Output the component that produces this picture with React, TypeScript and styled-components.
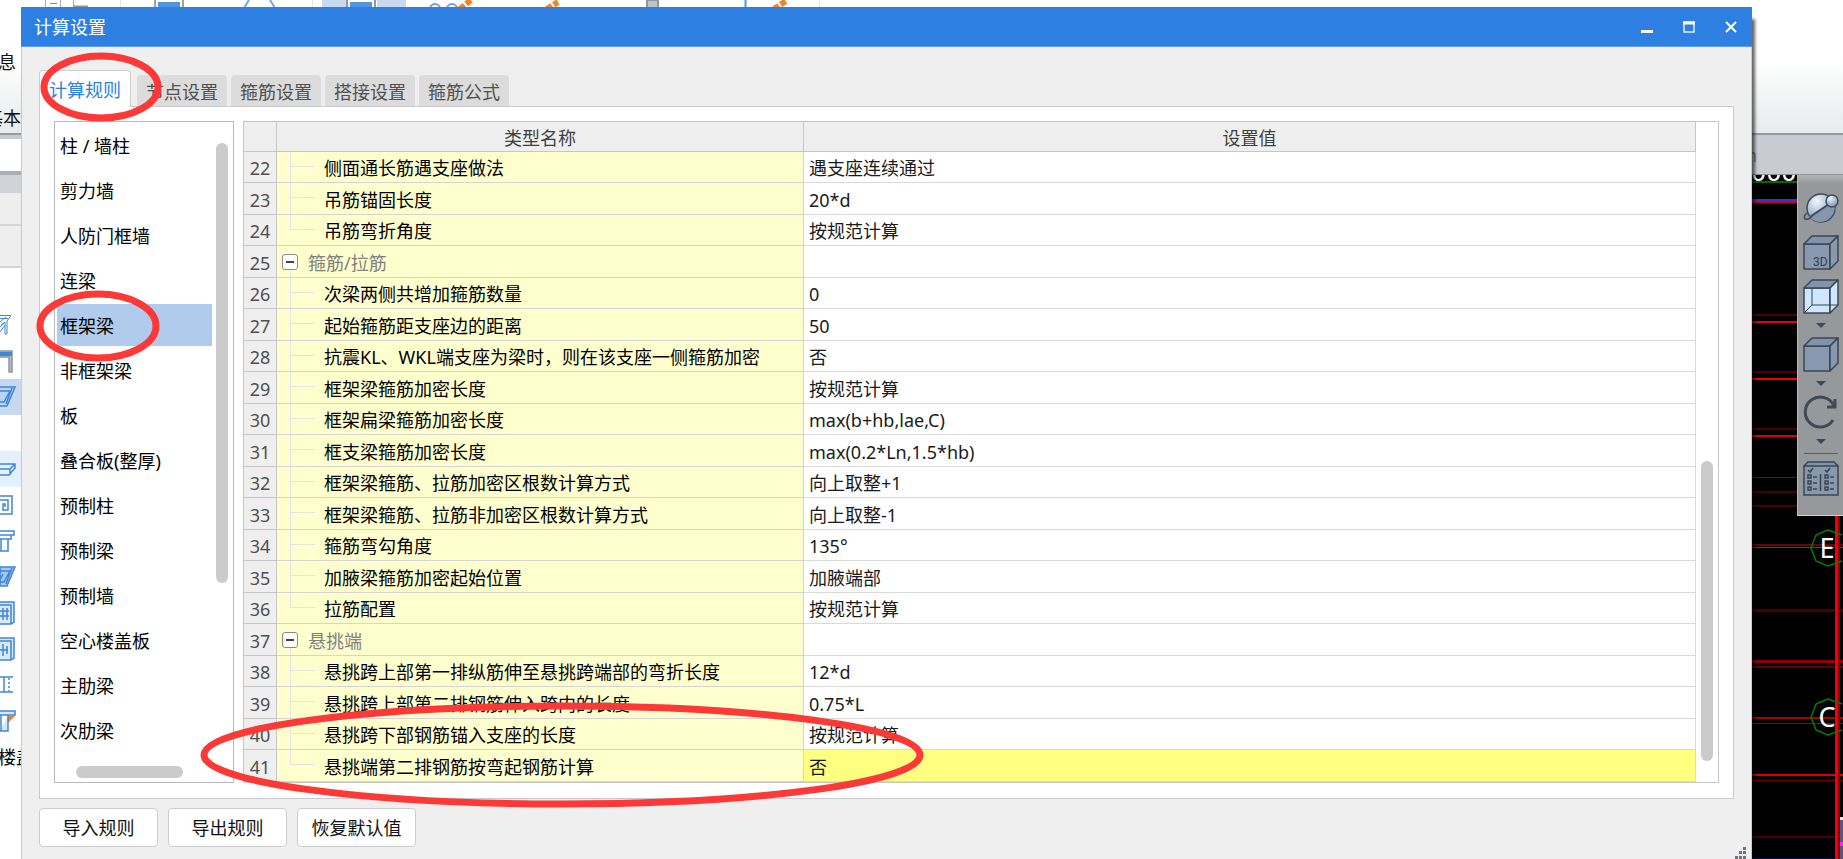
import React from "react";
import styled, { createGlobalStyle } from "styled-components";

const GlobalStyle = createGlobalStyle`
  * { box-sizing: border-box; }
  html, body { margin: 0; padding: 0; overflow: hidden; }
  body, button {
    font-family: "Noto Sans", "Noto Sans CJK SC", sans-serif;
    font-size: 18px;
    line-height: 24px;
  }
  button { margin: 0; padding: 0; border: 0; background: none; color: inherit; white-space: nowrap; }
  svg { display: block; flex: none; }
`;

const Page = styled.div`
  position: relative;
  display: flex;
  flex-direction: column;
  min-height: 100vh;
  overflow: hidden;
  background: #fff;
`;

/* ---------- host application behind the dialog ---------- */

const Ribbon = styled.header`
  display: flex;
  height: 135px;
  overflow: hidden;
  border-bottom: 2px solid #949a9d;
  background: linear-gradient(#fff 0, #fff 60px, #e6ebeb 133px);
`;

const RibbonLabels = styled.div`
  display: flex;
  flex-direction: column;
  align-items: flex-end;
  gap: 32px;
  width: 21px;
  padding-top: 50px;
  white-space: nowrap;
  color: #111;
`;

const RibbonLabel = styled.span<{ $inset?: boolean }>`
  padding-right: ${(p) => (p.$inset ? 5 : 0)}px;
`;

const Workspace = styled.div`
  display: flex;
  flex: 1;
`;

const SideColumn = styled.aside`
  display: flex;
  flex-direction: column;
  width: 21px;
  overflow: hidden;
  background: #fff;
`;

const SideField = styled.div`
  height: 40px;
  border-top: 4px solid #c8cbd0;
  border-bottom: 4px solid #a9afb5;
  background: #fff;
`;

const SideCaption = styled.div`
  height: 18px;
  background: #d0d3d8;
`;

const SideBar = styled.div<{ $height: number }>`
  height: ${(p) => p.$height}px;
  border-bottom: 2px solid #d3d5d8;
  background: #eee;
`;

const ToolList = styled.ul`
  display: flex;
  flex-direction: column;
  margin: 0;
  padding: 39px 0 0;
  list-style: none;
`;

const ToolItem = styled.li<{ $bg?: string }>`
  display: flex;
  align-items: center;
  justify-content: flex-start;
  height: 36px;
  white-space: nowrap;
  background: ${(p) => p.$bg ?? "transparent"};
`;

const ToolGroupLabel = styled.span`
  margin-left: -2px;
`;

const Viewport = styled.main`
  position: relative;
  display: flex;
  flex: 1;
  flex-direction: column;
  background: #000;
`;

const ViewHeader = styled.div`
  display: flex;
  justify-content: flex-end;
  align-items: center;
  height: 40px;
  padding-right: 86px;
  border-bottom: 1px solid #8d9194;
  background: #c8cbd0;
  color: #85817c;
`;

const Drawing = styled.div`
  display: flex;
  flex: 1;
  justify-content: flex-end;
  overflow: hidden;
`;

const ViewToolbar = styled.div`
  position: absolute;
  top: 40px;
  right: 0;
  display: flex;
  flex-direction: column;
  align-items: center;
  width: 46px;
  height: 341px;
  padding: 16px 4px 0 5px;
  border-left: 1px solid #b7b9bb;
  border-bottom: 1px solid #d0d2d4;
  background: linear-gradient(#b4b6b8 0, #96999c 8px);
`;

const ViewTool = styled.button`
  height: 36px;
  margin-bottom: 8px;
`;

const Caret = styled.span`
  width: 0;
  height: 0;
  margin-bottom: 9px;
  border: 5px solid transparent;
  border-top-color: #3c4956;
  border-bottom-width: 0;
`;

const ToolRule = styled.hr`
  width: 34px;
  height: 1px;
  margin: 0 0 7px;
  border: 0;
  background: #5a5e62;
`;

/* ---------- dialog ---------- */

const Dialog = styled.section`
  position: absolute;
  top: 7px;
  right: 91px;
  bottom: 0;
  left: 21px;
  display: flex;
  flex-direction: column;
  background: #efefef;
  border: solid #c3cbd9;
  border-width: 0 1px;
  box-shadow: 3px 12px 3px rgba(0, 0, 0, 0.6);
`;

const TitleBar = styled.header`
  display: flex;
  height: 40px;
  margin: 0 -1px;
  padding-left: 13px;
  background: #2d80e2;
  border-bottom: 1px solid #5d9ee9;
  color: #fff;
`;

const Title = styled.h1`
  flex: 1;
  margin: 0;
  font-size: 18px;
  font-weight: 400;
  line-height: 41px;
`;

const WindowButton = styled.button`
  display: flex;
  align-items: center;
  justify-content: center;
  width: 42px;
`;

const Tabs = styled.div`
  display: flex;
  align-items: flex-end;
  gap: 4px;
  height: 59px;
  padding: 0 17px;
`;

const Tab = styled.button<{ $active?: boolean }>`
  position: relative;
  width: ${(p) => (p.$active ? 92 : 90)}px;
  height: ${(p) => (p.$active ? 37 : 31)}px;
  margin: ${(p) => (p.$active ? "0 2px -1px 0" : "0")};
  padding-top: 2px;
  border: ${(p) => (p.$active ? "1px solid #cbcdd0" : "0")};
  border-bottom: 0;
  border-radius: 4px 4px 0 0;
  background: ${(p) => (p.$active ? "#fff" : "#dcdcdc")};
  color: ${(p) => (p.$active ? "#2d80e2" : "#505050")};
`;

const Panel = styled.div`
  display: flex;
  flex: 1;
  gap: 9px;
  margin: 0 17px;
  padding: 14px 14px 15px;
  border: 1px solid #c8cacd;
  background: #fff;
`;

const MemberBox = styled.nav`
  display: flex;
  flex-direction: column;
  width: 180px;
  border: 1px solid #b9b9b9;
`;

const MemberScroll = styled.div`
  display: flex;
  flex: 1;
`;

const MemberList = styled.ul`
  display: flex;
  flex: 1;
  flex-direction: column;
  gap: 3px;
  margin: 0;
  padding: 2px 0 0 2px;
  list-style: none;
`;

const MemberItem = styled.button<{ $active?: boolean }>`
  display: block;
  width: 100%;
  height: 42px;
  padding: 2px 0 0 3px;
  text-align: left;
  color: #000;
  background: ${(p) => (p.$active ? "#b1cbed" : "transparent")};
`;

const Thumb = styled.div`
  border-radius: 6px;
  background: #cbcbcb;
`;

const MemberTrack = styled.div`
  width: 21px;
  padding: 21px 5px 0 4px;
  ${Thumb} { height: 440px; }
`;

const MemberTrackX = styled.div`
  height: 16px;
  padding: 0 0 4px 21px;
  ${Thumb} { width: 107px; height: 12px; }
`;

const TableBox = styled.div`
  display: flex;
  flex: 1;
  border: 1px solid #c6c6c6;
`;

const TableTrack = styled.div`
  display: flex;
  flex-direction: column;
  justify-content: flex-end;
  width: 22px;
  padding: 0 5px 21px;
  ${Thumb} { height: 300px; }
`;

const Table = styled.table`
  flex: 1;
  table-layout: fixed;
  border-collapse: separate;
  border-spacing: 0;

  thead tr { height: 30px; }
  tbody tr { height: 31px; }
  tbody tr:nth-child(even) { height: 32px; }
`;

const NumberCol = styled.col` width: 33px; `;
const NameCol = styled.col` width: 527px; `;

const HeadCell = styled.th`
  padding: 2px 0 0;
  border: solid #c6c6c6;
  border-width: 0 1px 1px 0;
  background: #efefef;
  color: #404040;
  font-weight: 400;
`;

const NumberCell = styled.th`
  padding: 2px 0 0;
  border: solid #c6c6c6;
  border-width: 0 1px 1px 0;
  background: #efefef;
  color: #505050;
  font-weight: 400;
`;

type Branch = "group" | "middle" | "last";

const branchLines: Record<Branch, string> = {
  group: "linear-gradient(#e3e3e3, #e3e3e3) 13px 24px / 1px 100% no-repeat",
  middle:
    "linear-gradient(#e3e3e3, #e3e3e3) 13px 0 / 1px 100% no-repeat, linear-gradient(#e3e3e3, #e3e3e3) 13px 14px / 25px 1px no-repeat",
  last:
    "linear-gradient(#e3e3e3, #e3e3e3) 13px 0 / 1px 15px no-repeat, linear-gradient(#e3e3e3, #e3e3e3) 13px 14px / 25px 1px no-repeat",
};

const NameCell = styled.td<{ $branch: Branch }>`
  padding: 2px 0 0 ${(p) => (p.$branch === "group" ? 5 : 47)}px;
  border: solid #d4d4d4;
  border-width: 0 1px 1px 0;
  background: ${(p) => branchLines[p.$branch]}, #ffffce;
  color: ${(p) => (p.$branch === "group" ? "#808080" : "#000")};
  white-space: nowrap;
`;

const GroupLabel = styled.div`
  display: flex;
  gap: 10px;
`;

const Toggle = styled.button`
  display: flex;
  align-items: center;
  justify-content: center;
  width: 16px;
  height: 16px;
  margin-top: 3px;
  border: 1px solid #8a8a8a;
  border-radius: 3px;
  background: #fff;
`;

const ValueCell = styled.td<{ $selected?: boolean }>`
  padding: 2px 0 0 5px;
  border: solid #d9d9d9;
  border-width: 0 1px 1px 0;
  background: ${(p) => (p.$selected ? "#ffff80" : "#fff")};
  color: #1a1a1a;
  white-space: nowrap;
`;

const Footer = styled.footer`
  display: flex;
  align-items: flex-end;
  justify-content: space-between;
  padding: 9px 5px 0 17px;
`;

const Actions = styled.div`
  display: flex;
  gap: 10px;
  padding-bottom: 12px;
`;

const ActionButton = styled.button`
  width: 119px;
  height: 39px;
  border: 1px solid #cdcdcd;
  border-radius: 4px;
  background: #fff;
  color: #111;
`;

const Annotations = styled.svg`
  position: absolute;
  top: 0;
  left: 0;
  pointer-events: none;
`;

/* ---------- data ---------- */

const tabs = ["计算规则", "节点设置", "箍筋设置", "搭接设置", "箍筋公式"];

const members = [
  "柱 / 墙柱", "剪力墙", "人防门框墙", "连梁", "框架梁", "非框架梁", "板",
  "叠合板(整厚)", "预制柱", "预制梁", "预制墙", "空心楼盖板", "主肋梁", "次肋梁",
];

type Row = { id: number; name: string; value: string; branch: Branch };

const rows: Row[] = [
  { id: 22, name: "侧面通长筋遇支座做法", value: "遇支座连续通过", branch: "middle" },
  { id: 23, name: "吊筋锚固长度", value: "20*d", branch: "middle" },
  { id: 24, name: "吊筋弯折角度", value: "按规范计算", branch: "last" },
  { id: 25, name: "箍筋/拉筋", value: "", branch: "group" },
  { id: 26, name: "次梁两侧共增加箍筋数量", value: "0", branch: "middle" },
  { id: 27, name: "起始箍筋距支座边的距离", value: "50", branch: "middle" },
  { id: 28, name: "抗震KL、WKL端支座为梁时，则在该支座一侧箍筋加密", value: "否", branch: "middle" },
  { id: 29, name: "框架梁箍筋加密长度", value: "按规范计算", branch: "middle" },
  { id: 30, name: "框架扁梁箍筋加密长度", value: "max(b+hb,lae,C)", branch: "middle" },
  { id: 31, name: "框支梁箍筋加密长度", value: "max(0.2*Ln,1.5*hb)", branch: "middle" },
  { id: 32, name: "框架梁箍筋、拉筋加密区根数计算方式", value: "向上取整+1", branch: "middle" },
  { id: 33, name: "框架梁箍筋、拉筋非加密区根数计算方式", value: "向上取整-1", branch: "middle" },
  { id: 34, name: "箍筋弯勾角度", value: "135°", branch: "middle" },
  { id: 35, name: "加腋梁箍筋加密起始位置", value: "加腋端部", branch: "middle" },
  { id: 36, name: "拉筋配置", value: "按规范计算", branch: "last" },
  { id: 37, name: "悬挑端", value: "", branch: "group" },
  { id: 38, name: "悬挑跨上部第一排纵筋伸至悬挑跨端部的弯折长度", value: "12*d", branch: "middle" },
  { id: 39, name: "悬挑跨上部第二排钢筋伸入跨内的长度", value: "0.75*L", branch: "middle" },
  { id: 40, name: "悬挑跨下部钢筋锚入支座的长度", value: "按规范计算", branch: "middle" },
  { id: 41, name: "悬挑端第二排钢筋按弯起钢筋计算", value: "否", branch: "last" },
];

/* ---------- drawings ---------- */

const RibbonIcons = () => (
  <svg width="820" height="8" viewBox="21 0 820 8" aria-hidden="true" fill="none">
    <path d="M45.500 0V8M60.500 0V8M73.500 0V8" stroke="#a5abb0" />
    <path d="M50 3.500H57" stroke="#888" />
    <path d="M73 6.500H88" stroke="#8f9895" strokeWidth="2" />
    <path d="M120.500 0V8M312.500 0V8M819.500 0V8" stroke="#e6e6e6" />
    <path d="M155 0V8M183 0V8" stroke="#9aa2a8" strokeWidth="2" />
    <rect x="158" y="2" width="22" height="6" fill="#4f95e2" />
    <path d="M249 0L244 8M270 0L275 8" stroke="#6fa8e6" strokeWidth="2" />
    <rect x="322" y="0" width="84" height="8" fill="#c7d8f0" />
    <rect x="346" y="0" width="31" height="8" fill="#fff" />
    <path d="M347 0V8M375 0V8" stroke="#8c98a4" strokeWidth="2" />
    <rect x="350" y="2" width="22" height="6" fill="#4f95e2" />
    <circle cx="435" cy="9" r="5" stroke="#6fa0dc" strokeWidth="2" />
    <circle cx="452" cy="9" r="5" stroke="#6fa0dc" strokeWidth="2" />
    <path d="M460 9L471 0M547 9L558 2M774 9L786 1" stroke="#f5812a" strokeWidth="6" strokeDasharray="6 2" />
    <rect x="647" y="0" width="11" height="8" fill="#bcc4c8" stroke="#8c989e" strokeWidth="2" />
    <path d="M745.500 0V8" stroke="#4f95e2" strokeWidth="2" />
  </svg>
);

const toolShapes: React.ReactNode[] = [
  <g key="a" strokeWidth="1"><path d="M0 2.500H11L7 8V21H5V9L1 12M0 5.500H8M0 19L5 12" /><path d="M0 9L6 4M0 14L4 10" /></g>,
  <g key="b"><path d="M0 2H12V23H9V8H0" fill="#b8bec2" stroke="#8d969c" /><path d="M0 5H12" strokeWidth="4" /></g>,
  <path key="c" d="M0 2H15L7 21H0M0 6H10L4 17H0M12 3L6 19" fill="#b9d3f2" />,
  null,
  <path key="d" d="M0 7H15V11L9 18H0M0 12H10L15 7M10 12V18" />,
  <path key="e" d="M0 3H12V21H0M0 7H8V17H3V11H5V14" />,
  <path key="f" d="M0 2H14V6H11V10H0M0 6H11M8 10V22H0M1 10V22" />,
  <g key="g"><path d="M0 2H15L7 21H0Z" fill="#a9c8ee" /><path d="M0 6H10L4 17H0M3 9L0 15M12 3L6 19" /></g>,
  <path key="h" d="M0 1H14V21L11 23H0M0 4H11V23M0 10H9M0 15H9M3 7V19M7 7V19" fill="#d8e7fa" />,
  <path key="i" d="M0 1H14V21L11 23H0M0 4H11V23M0 13H8M3 7V19M7 9V17" fill="#d8e7fa" />,
  <g key="j"><path d="M0 4H13M0 19H13M4 4V19" /><path d="M9 5V18" strokeDasharray="2 2" /></g>,
  <g key="k"><path d="M8 7H15L8 14Z" fill="#f58220" stroke="none" /><path d="M0 2H15V6H0M8 6V22H0M1 6V22" fill="#d8e7fa" /></g>,
];

const toolBackgrounds: Record<number, string> = { 2: "#c7d9f1", 4: "#e3f1fe" };

const CubeIcon = ({ face = "#8798af", label, open }: { face?: string; label?: string; open?: boolean }) => (
  <svg width="36" height="36" viewBox="0 0 36 36" aria-hidden="true" fill="none" stroke="#3b4654" strokeWidth="1.500" strokeLinejoin="round">
    <path d="M1 9H27V34H1Z" fill={face} />
    <path d="M1 9L9 1H35L27 9Z" fill="#8093aa" />
    <path d="M27 9L35 1V26L27 34Z" fill={face} />
    {open && <path d="M9 9V26H35M9 26L1 34" strokeWidth="1" />}
    {label && (
      <text x="10" y="31" fontFamily="Roboto, sans-serif" fontSize="12" fill="#36414d" stroke="none">{label}</text>
    )}
  </svg>
);

const OrbitIcon = () => (
  <svg width="36" height="36" viewBox="0 0 36 36" aria-hidden="true" stroke="#3f4c5c" strokeWidth="1.500">
    <defs>
      <radialGradient id="ball" cx="0.35" cy="0.25" r="0.8">
        <stop offset="0" stopColor="#f2f7fc" />
        <stop offset="0.6" stopColor="#a9bace" />
        <stop offset="1" stopColor="#7e92ab" />
      </radialGradient>
    </defs>
    <circle cx="18" cy="17" r="14" fill="url(#ball)" />
    <path d="M6 25L26 13L32 17Q29 30 18 31Q10 31 6 25Z" fill="#8497ae" stroke="none" />
    <path d="M7 26L26 13" fill="none" strokeWidth="2" />
    <path d="M4 22Q0 25 2 28Q6 29 9 25" fill="none" />
    <circle cx="29" cy="10" r="6" fill="url(#ball)" />
  </svg>
);

const RotateIcon = () => (
  <svg width="36" height="36" viewBox="0 0 36 36" aria-hidden="true" fill="none" stroke="#3f4a57" strokeWidth="3">
    <path d="M30 25A15 15 0 1 1 31 11" />
    <path d="M24 12H32V4" />
  </svg>
);

const ListIcon = () => (
  <svg width="36" height="36" viewBox="0 0 36 36" aria-hidden="true" fill="none" stroke="#3b4654" strokeWidth="1.500">
    <path d="M1 5L5 1H31L35 5" fill="#8093aa" />
    <path d="M1 5H35V34H1Z" fill="#8798af" />
    <path d="M17.500 13V30M5 9L7 11L10 7M22 9L24 11L27 7" />
    {[14, 20, 26].map((y) => (
      <path key={y} d={`M5 ${y}h3v3h-3zM10 ${y + 2}h4M22 ${y}h3v3h-3zM27 ${y + 2}h4`} />
    ))}
  </svg>
);

const gridLines: [number, number, string][] = [
  [314, 2, "#500000"], [321, 2, "#e80000"], [371, 2, "#500000"], [378, 2, "#f00000"],
  [428, 2, "#500000"], [435, 2, "#e00000"], [477, 1, "#8a0000"], [491, 2, "#480000"],
  [505, 2, "#480000"], [544, 2, "#700000"], [547, 1, "#f00000"], [609, 3, "#480000"],
  [660, 3, "#900000"], [666, 2, "#600000"], [717, 2, "#a80000"], [723, 1, "#a00000"],
  [774, 2, "#d80000"], [780, 1, "#700000"], [836, 2, "#480000"],
];

const AxisBubble = ({ y, name }: { y: number; name: string }) => (
  <g>
    <path d={`M76 ${y - 18}L64 ${y - 13}L59 ${y}L64 ${y + 13}L76 ${y + 18}L90 ${y + 13}M76 ${y - 18}L90 ${y - 13}`} fill="none" stroke="#008000" strokeWidth="1.500" />
    <text x="75" y={y + 10} textAnchor="middle" fontFamily="'Noto Sans', sans-serif" fontSize="27" fill="#fff">{name}</text>
  </g>
);

const GridDrawing = () => (
  <svg width="91" height="684" viewBox="0 175 91 684" aria-hidden="true">
    <text x="-1" y="181" fontFamily="Roboto, sans-serif" fontSize="27" fill="#fff">000</text>
    <rect x="0" y="181" width="91" height="2" fill="#006800" />
    <rect x="0" y="199" width="91" height="2" fill="#3434d8" />
    <rect x="0" y="201" width="91" height="2" fill="#d80000" />
    {gridLines.map(([y, h, color]) => (
      <rect key={y} x="0" y={y} width="91" height={h} fill={color} />
    ))}
    <rect x="83" y="500" width="3" height="359" fill="#f00000" />
    <rect x="86" y="500" width="2" height="359" fill="#900000" />
    <AxisBubble y={548} name="E" />
    <AxisBubble y={717} name="C" />
    <rect x="88" y="817" width="3" height="42" fill="#5c5480" />
    <rect x="88" y="817" width="3" height="3" fill="#e6e6f4" />
    <rect x="88" y="842" width="3" height="4" fill="#f02cf0" />
    <rect x="0" y="858" width="83" height="1" fill="#101048" />
  </svg>
);

const GripIcon = () => (
  <svg width="12" height="12" viewBox="0 0 12 12" aria-hidden="true" fill="#70757c">
    <path d="M9 0h3v3h-3zM5 4h3v3h-3zM9 4h3v3h-3zM1 9h3v3h-3zM5 9h3v3h-3zM9 9h3v3h-3z" />
  </svg>
);

export default function App() {
  return (
    <Page>
      <GlobalStyle />
      <Ribbon>
        <RibbonLabels>
          <RibbonLabel $inset>信息</RibbonLabel>
          <RibbonLabel>基本</RibbonLabel>
        </RibbonLabels>
        <RibbonIcons />
      </Ribbon>
      <Workspace>
        <SideColumn>
          <SideField />
          <SideCaption />
          <SideBar $height={33} />
          <SideBar $height={42} />
          <ToolList>
            {toolShapes.map((shape, i) => (
              <ToolItem key={i} $bg={toolBackgrounds[i]}>
                {shape && (
                  <svg width="18" height="24" viewBox="0 0 18 24" aria-hidden="true" fill="none" stroke="#3f86d6" strokeWidth="1.500">
                    {shape}
                  </svg>
                )}
              </ToolItem>
            ))}
            <ToolItem>
              <ToolGroupLabel>楼盖</ToolGroupLabel>
            </ToolItem>
          </ToolList>
        </SideColumn>
        <Viewport>
          <ViewHeader>n</ViewHeader>
          <Drawing>
            <GridDrawing />
          </Drawing>
          <ViewToolbar>
            <ViewTool aria-label="动态观察"><OrbitIcon /></ViewTool>
            <ViewTool aria-label="三维"><CubeIcon label="3D" /></ViewTool>
            <ViewTool aria-label="线框"><CubeIcon face="#cfe6ff" open /></ViewTool>
            <Caret />
            <ViewTool aria-label="实体"><CubeIcon /></ViewTool>
            <Caret />
            <ViewTool aria-label="旋转"><RotateIcon /></ViewTool>
            <Caret />
            <ToolRule />
            <ViewTool aria-label="显示设置"><ListIcon /></ViewTool>
          </ViewToolbar>
        </Viewport>
      </Workspace>

      <Dialog role="dialog" aria-labelledby="dialog-title">
        <TitleBar>
          <Title id="dialog-title">计算设置</Title>
          <WindowButton aria-label="最小化">
            <svg width="12" height="12" viewBox="0 0 12 12"><path d="M0 9H12V12H0Z" fill="#fff" /></svg>
          </WindowButton>
          <WindowButton aria-label="最大化">
            <svg width="12" height="12" viewBox="0 0 12 12" fill="none"><path d="M1 1H11V11H1Z" stroke="#e2edfb" strokeWidth="1.500" /><path d="M0 2H12" stroke="#fff" strokeWidth="3" /></svg>
          </WindowButton>
          <WindowButton aria-label="关闭">
            <svg width="12" height="12" viewBox="0 0 12 12"><path d="M1 1L11 11M11 1L1 11" stroke="#fff" strokeWidth="2" /></svg>
          </WindowButton>
        </TitleBar>

        <Tabs role="tablist">
          {tabs.map((t, i) => (
            <Tab key={t} role="tab" aria-selected={i === 0} $active={i === 0}>{t}</Tab>
          ))}
        </Tabs>

        <Panel role="tabpanel">
          <MemberBox aria-label="构件类型">
            <MemberScroll>
              <MemberList>
                {members.map((m) => (
                  <li key={m}>
                    <MemberItem $active={m === "框架梁"} aria-current={m === "框架梁"}>{m}</MemberItem>
                  </li>
                ))}
              </MemberList>
              <MemberTrack><Thumb /></MemberTrack>
            </MemberScroll>
            <MemberTrackX><Thumb /></MemberTrackX>
          </MemberBox>

          <TableBox>
            <Table>
              <colgroup>
                <NumberCol />
                <NameCol />
                <col />
              </colgroup>
              <thead>
                <tr>
                  <HeadCell />
                  <HeadCell scope="col">类型名称</HeadCell>
                  <HeadCell scope="col">设置值</HeadCell>
                </tr>
              </thead>
              <tbody>
                {rows.map((r) => (
                  <tr key={r.id}>
                    <NumberCell scope="row">{r.id}</NumberCell>
                    <NameCell $branch={r.branch}>
                      {r.branch === "group" ? (
                        <GroupLabel>
                          <Toggle aria-label="折叠" aria-expanded>
                            <svg width="8" height="2" viewBox="0 0 8 2"><path d="M0 0H8V2H0Z" fill="#444" /></svg>
                          </Toggle>
                          {r.name}
                        </GroupLabel>
                      ) : (
                        r.name
                      )}
                    </NameCell>
                    <ValueCell $selected={r.id === 41}>{r.value}</ValueCell>
                  </tr>
                ))}
              </tbody>
            </Table>
            <TableTrack><Thumb /></TableTrack>
          </TableBox>
        </Panel>

        <Footer>
          <Actions>
            <ActionButton>导入规则</ActionButton>
            <ActionButton>导出规则</ActionButton>
            <ActionButton>恢复默认值</ActionButton>
          </Actions>
          <GripIcon />
        </Footer>
      </Dialog>

      <Annotations width="940" height="820" viewBox="0 0 940 820" fill="none" stroke="#fb3937" strokeWidth="7" aria-hidden="true">
        <ellipse cx="101" cy="87" rx="57" ry="31" />
        <ellipse cx="98" cy="326" rx="58" ry="32" />
        <ellipse cx="562" cy="755" rx="358" ry="49" />
      </Annotations>
    </Page>
  );
}
